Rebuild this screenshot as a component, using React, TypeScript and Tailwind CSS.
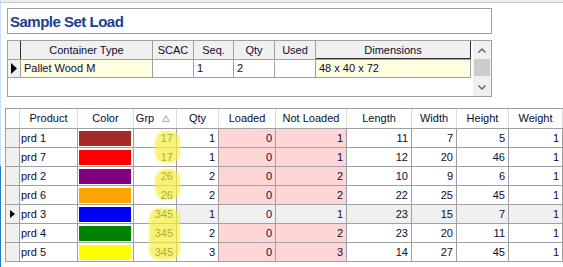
import React from 'react';

type Product = {
  name: string;
  color: string;
  grp: number;
  qty: number;
  loaded: number;
  notLoaded: number;
  length: number;
  width: number;
  height: number;
  weight: number;
  selected?: boolean;
};

const products: Product[] = [
  { name: 'prd 1', color: '#a52a2a', grp: 17, qty: 1, loaded: 0, notLoaded: 1, length: 11, width: 7, height: 5, weight: 1 },
  { name: 'prd 7', color: '#ff0000', grp: 17, qty: 1, loaded: 0, notLoaded: 1, length: 12, width: 20, height: 46, weight: 1 },
  { name: 'prd 2', color: '#800080', grp: 26, qty: 2, loaded: 0, notLoaded: 2, length: 10, width: 9, height: 6, weight: 1 },
  { name: 'prd 6', color: '#ffa500', grp: 26, qty: 2, loaded: 0, notLoaded: 2, length: 22, width: 25, height: 45, weight: 1 },
  { name: 'prd 3', color: '#0000ff', grp: 345, qty: 1, loaded: 0, notLoaded: 1, length: 23, width: 15, height: 7, weight: 1, selected: true },
  { name: 'prd 4', color: '#008000', grp: 345, qty: 2, loaded: 0, notLoaded: 2, length: 23, width: 20, height: 11, weight: 1 },
  { name: 'prd 5', color: '#ffff00', grp: 345, qty: 3, loaded: 0, notLoaded: 3, length: 14, width: 27, height: 45, weight: 1 },
];

function RowArrow({ big = false }: { big?: boolean }) {
  return big ? (
    <svg width="6" height="11" viewBox="0 0 6 11">
      <path d="M0 0 L6 5.5 L0 11 Z" fill="#000" />
    </svg>
  ) : (
    <svg width="5" height="8" viewBox="0 0 5 8">
      <path d="M0 0 L5 4 L0 8 Z" fill="#000" />
    </svg>
  );
}

function Chevron({ up }: { up?: boolean }) {
  return (
    <svg width="8" height="5" viewBox="0 0 8 5">
      <path d={up ? 'M0.5 4.5 L4 1 L7.5 4.5' : 'M0.5 0.5 L4 4 L7.5 0.5'} fill="none" stroke="#606060" strokeWidth="1.4" />
    </svg>
  );
}

function ContainerGrid() {
  const head = 'h-full flex items-center justify-center border-r border-[#a0a0a0] bg-[#f0f0f0]';
  return (
    <div className="ml-[6px] mt-[6px] w-[485px] h-[57px] border border-[#a0a0a0] flex">
      <div className="w-[463px] flex flex-col">
        {/* header */}
        <div className="h-[19px] flex border-b border-[#a0a0a0]">
          <div className="w-[13px] h-full bg-[#f0f0f0] border-r border-[#303030]" />
          <div className={`w-[132px] ${head}`}>Container Type</div>
          <div className={`w-[41px] ${head}`}>SCAC</div>
          <div className={`w-[40px] ${head}`}>Seq.</div>
          <div className={`w-[41px] ${head}`}>Qty</div>
          <div className={`w-[41px] ${head}`}>Used</div>
          <div className="w-[155px] h-full flex items-center justify-center bg-[#f0f0f0] border-r border-[#303030] shadow-[inset_0_-1px_0_#303030]">Dimensions</div>
        </div>
        {/* row */}
        <div className="h-[18px] flex border-b border-[#a0a0a0]">
          <div className="w-[13px] h-full bg-[#f0f0f0] border-r border-[#a0a0a0] flex items-center justify-center">
            <RowArrow big />
          </div>
          <div className="w-[132px] h-full bg-[#ffffe1] border-r border-[#a0a0a0] flex items-center pl-[3px]">Pallet Wood M</div>
          <div className="w-[41px] h-full border-r border-[#a0a0a0]" />
          <div className="w-[40px] h-full border-r border-[#a0a0a0] flex items-center pl-[3px]">1</div>
          <div className="w-[41px] h-full border-r border-[#a0a0a0] flex items-center pl-[3px]">2</div>
          <div className="w-[41px] h-full border-r border-[#a0a0a0]" />
          <div className="w-[155px] h-full bg-[#ffffe1] border-r border-[#a0a0a0] flex items-center pl-[3px]">48 x 40 x 72</div>
        </div>
      </div>
      <div className="w-[2px]" />
      {/* scrollbar */}
      <div className="w-[18px] h-full bg-[#f0f0f0] flex flex-col items-center">
        <div className="h-[18px] flex items-center justify-center"><Chevron up /></div>
        <div className="w-[16px] h-[17px] bg-[#cdcdcd]" />
        <div className="flex-1" />
        <div className="h-[18px] flex items-center justify-center"><Chevron /></div>
      </div>
    </div>
  );
}

function ProductGrid() {
  const hc = 'h-full flex items-center justify-center border-r border-[#dcdcdc]';
  const num = 'h-full flex items-center justify-end pr-[3px] border-r border-[#a0a0a0]';
  return (
    <div className="ml-[4px] mt-[11px] border-l border-t border-[#a0a0a0] relative">
      {/* header */}
      <div className="h-[20px] flex border-b border-[#a0a0a0] bg-white">
        <div className="w-[14px] h-full border-r border-[#dcdcdc]" />
        <div className={`w-[58px] ${hc}`}>Product</div>
        <div className={`w-[56px] ${hc}`}>Color</div>
        <div className={`w-[43px] ${hc} gap-[8px] pr-[4px]`}>
          <span>Grp</span>
          <svg width="8" height="7" viewBox="0 0 8 7">
            <path d="M4 0.7 L7.4 6.4 L0.6 6.4 Z" fill="none" stroke="#a8a8a8" strokeWidth="1" />
          </svg>
        </div>
        <div className={`w-[42px] ${hc}`}>Qty</div>
        <div className={`w-[57px] ${hc}`}>Loaded</div>
        <div className={`w-[71px] ${hc}`}>Not Loaded</div>
        <div className={`w-[65px] ${hc}`}>Length</div>
        <div className={`w-[45px] ${hc}`}>Width</div>
        <div className={`w-[52px] ${hc}`}>Height</div>
        <div className={`w-[54px] ${hc}`}>Weight</div>
      </div>
      {/* body */}
      <div className="relative">
        {products.map((p) => {
          const sel = p.selected ? 'bg-[#f0f0f0]' : '';
          const pink = p.selected ? 'bg-[#f0f0f0]' : 'bg-[#ffd6d6]';
          return (
            <div key={p.name} className="h-[19px] flex border-b border-[#a0a0a0]">
              <div className="w-[14px] h-full bg-[#f0f0f0] border-r border-[#a0a0a0] flex items-center justify-center">
                {p.selected && <RowArrow />}
              </div>
              <div className="w-[58px] h-full flex items-center pl-[1px] border-r border-[#a0a0a0]">{p.name}</div>
              <div className="w-[56px] h-full pt-[2px] pl-[1px] border-r border-[#a0a0a0]">
                <div className="w-[52px] h-[15px]" style={{ backgroundColor: p.color }} />
              </div>
              <div className={`w-[43px] ${num}`}>{p.grp}</div>
              <div className={`w-[42px] ${num} ${sel}`}>{p.qty}</div>
              <div className={`w-[57px] ${num} ${pink}`}>{p.loaded}</div>
              <div className={`w-[71px] ${num} ${pink}`}>{p.notLoaded}</div>
              <div className={`w-[65px] ${num} ${sel}`}>{p.length}</div>
              <div className={`w-[45px] ${num} ${sel}`}>{p.width}</div>
              <div className={`w-[52px] ${num} ${sel}`}>{p.height}</div>
              <div className={`w-[54px] ${num} ${sel}`}>{p.weight}</div>
            </div>
          );
        })}
        {/* group highlights */}
        <div className="absolute left-[149px] top-[2px] w-[25px] h-[32px] rounded-[10px] bg-[#f5ec3c]/70 blur-[0.8px]" />
        <div className="absolute left-[149px] top-[40px] w-[25px] h-[31px] rounded-[10px] bg-[#f5ec3c]/70 blur-[0.8px]" />
        <div className="absolute left-[143px] top-[79px] w-[31px] h-[52px] rounded-[10px] bg-[#f5ec3c]/70 blur-[0.8px]" />
      </div>
    </div>
  );
}

export default function App() {
  return (
    <div className="w-[563px] h-[267px] overflow-hidden bg-white flex font-['Liberation_Sans',Arial,sans-serif] text-[11px] text-[#0c0c30]">
      {/* window edge */}
      <div className="w-[1px] h-full flex flex-col">
        <div className="h-[166px] bg-[#c9dcf2]" />
        <div className="flex-1 bg-[#1e78d8]" />
      </div>
      <div className="flex-1 flex flex-col">
        <div className="h-[3px] bg-[#f0f0f0] border-b border-[#c8c8c8]" />
        {/* title */}
        <div className="ml-[6px] mt-[5px] w-[485px] h-[26px] border border-[#a0a0a0] flex items-center pl-[2px]">
          <span className="text-[15px] font-bold tracking-[-0.5px] text-[#1b3d8f] leading-none">Sample Set Load</span>
        </div>
        <ContainerGrid />
        <ProductGrid />
      </div>
    </div>
  );
}
